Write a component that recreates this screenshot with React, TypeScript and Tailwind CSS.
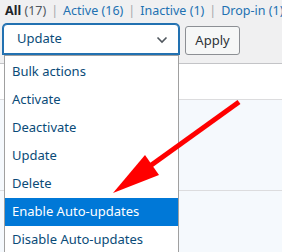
import React from "react";

const filters = [
  { label: "All", count: 17, current: true },
  { label: "Active", count: 16 },
  { label: "Inactive", count: 1 },
  { label: "Drop-in", count: 1 },
];

const actions = [
  "Bulk actions",
  "Activate",
  "Deactivate",
  "Update",
  "Delete",
  "Enable Auto-updates",
  "Disable Auto-updates",
];

function App() {
  return (
    <div className="relative w-[282px] h-[252px] overflow-hidden bg-[#f0f0f1] font-['Noto_Sans',sans-serif]">
      {/* status filters */}
      <ul className="flex items-center whitespace-nowrap pl-[5px] pt-[1px] h-[20px] text-[12.5px] leading-[18px]">
        {filters.map((f, i) => (
          <li key={f.label} className="flex items-center">
            {i > 0 && <span className="mx-[5px] text-[#a7aaad]">|</span>}
            <span className={f.current ? "font-bold text-[#1d2327]" : "text-[#2271b1]"}>
              {f.label}{" "}
              <span className={f.current ? "font-normal text-[#50575e]" : ""}>({f.count})</span>
            </span>
          </li>
        ))}
      </ul>

      {/* bulk action row */}
      <div className="flex items-start pl-[3px] pt-[4px] gap-[6px]">
        <div className="relative w-[176px] h-[30px] bg-white border border-[#2271b1] shadow-[0_0_0_1px_#2271b1] rounded-t-[4px] flex items-center justify-between pl-[13px] pr-[10px] text-[13px] text-[#0a4b78]">
          <span>Update</span>
          <svg width="12" height="8" viewBox="0 0 12 8" className="mt-[1px]">
            <path d="M1.5 1.5 L6 6 L10.5 1.5" fill="none" stroke="#50575e" strokeWidth="1.6" />
          </svg>
        </div>
        <button className="mt-[2px] w-[55px] h-[29px] rounded-[3px] border border-[#8c8f94] bg-[#f6f7f7] text-[13px] text-[#2c3338]">
          Apply
        </button>
      </div>

      {/* plugin table behind the open menu */}
      <div className="mt-[8px] border-t border-[#c3c4c7]">
        <div className="h-[36px] bg-white border-b border-[#dcdcde]" />
        <div className="h-[91px] bg-[#f5f9fd] border-b border-[#dcdcde]" />
        <div className="h-[80px] bg-[#f5f9fd]" />
      </div>

      {/* open dropdown list */}
      <ul className="absolute left-[4px] top-[55px] w-[175px] bg-white border border-[#a0a0a0] pt-[2px] text-[13px] text-[#0a4b78]">
        {actions.map((a) => (
          <li
            key={a}
            className={
              "h-[28px] flex items-center pl-[7px] whitespace-nowrap " +
              (a === "Enable Auto-updates" ? "bg-[#0078d7] text-white" : "")
            }
          >
            {a}
          </li>
        ))}
      </ul>

      {/* red annotation arrow */}
      <svg className="absolute left-0 top-0 pointer-events-none" width="282" height="252" viewBox="0 0 282 252">
        <line x1="239" y1="102" x2="150" y2="166" stroke="#ff0000" strokeWidth="5" />
        <polygon points="113,193 145,155 159,175" fill="#ff0000" />
      </svg>
    </div>
  );
}

export default App;
